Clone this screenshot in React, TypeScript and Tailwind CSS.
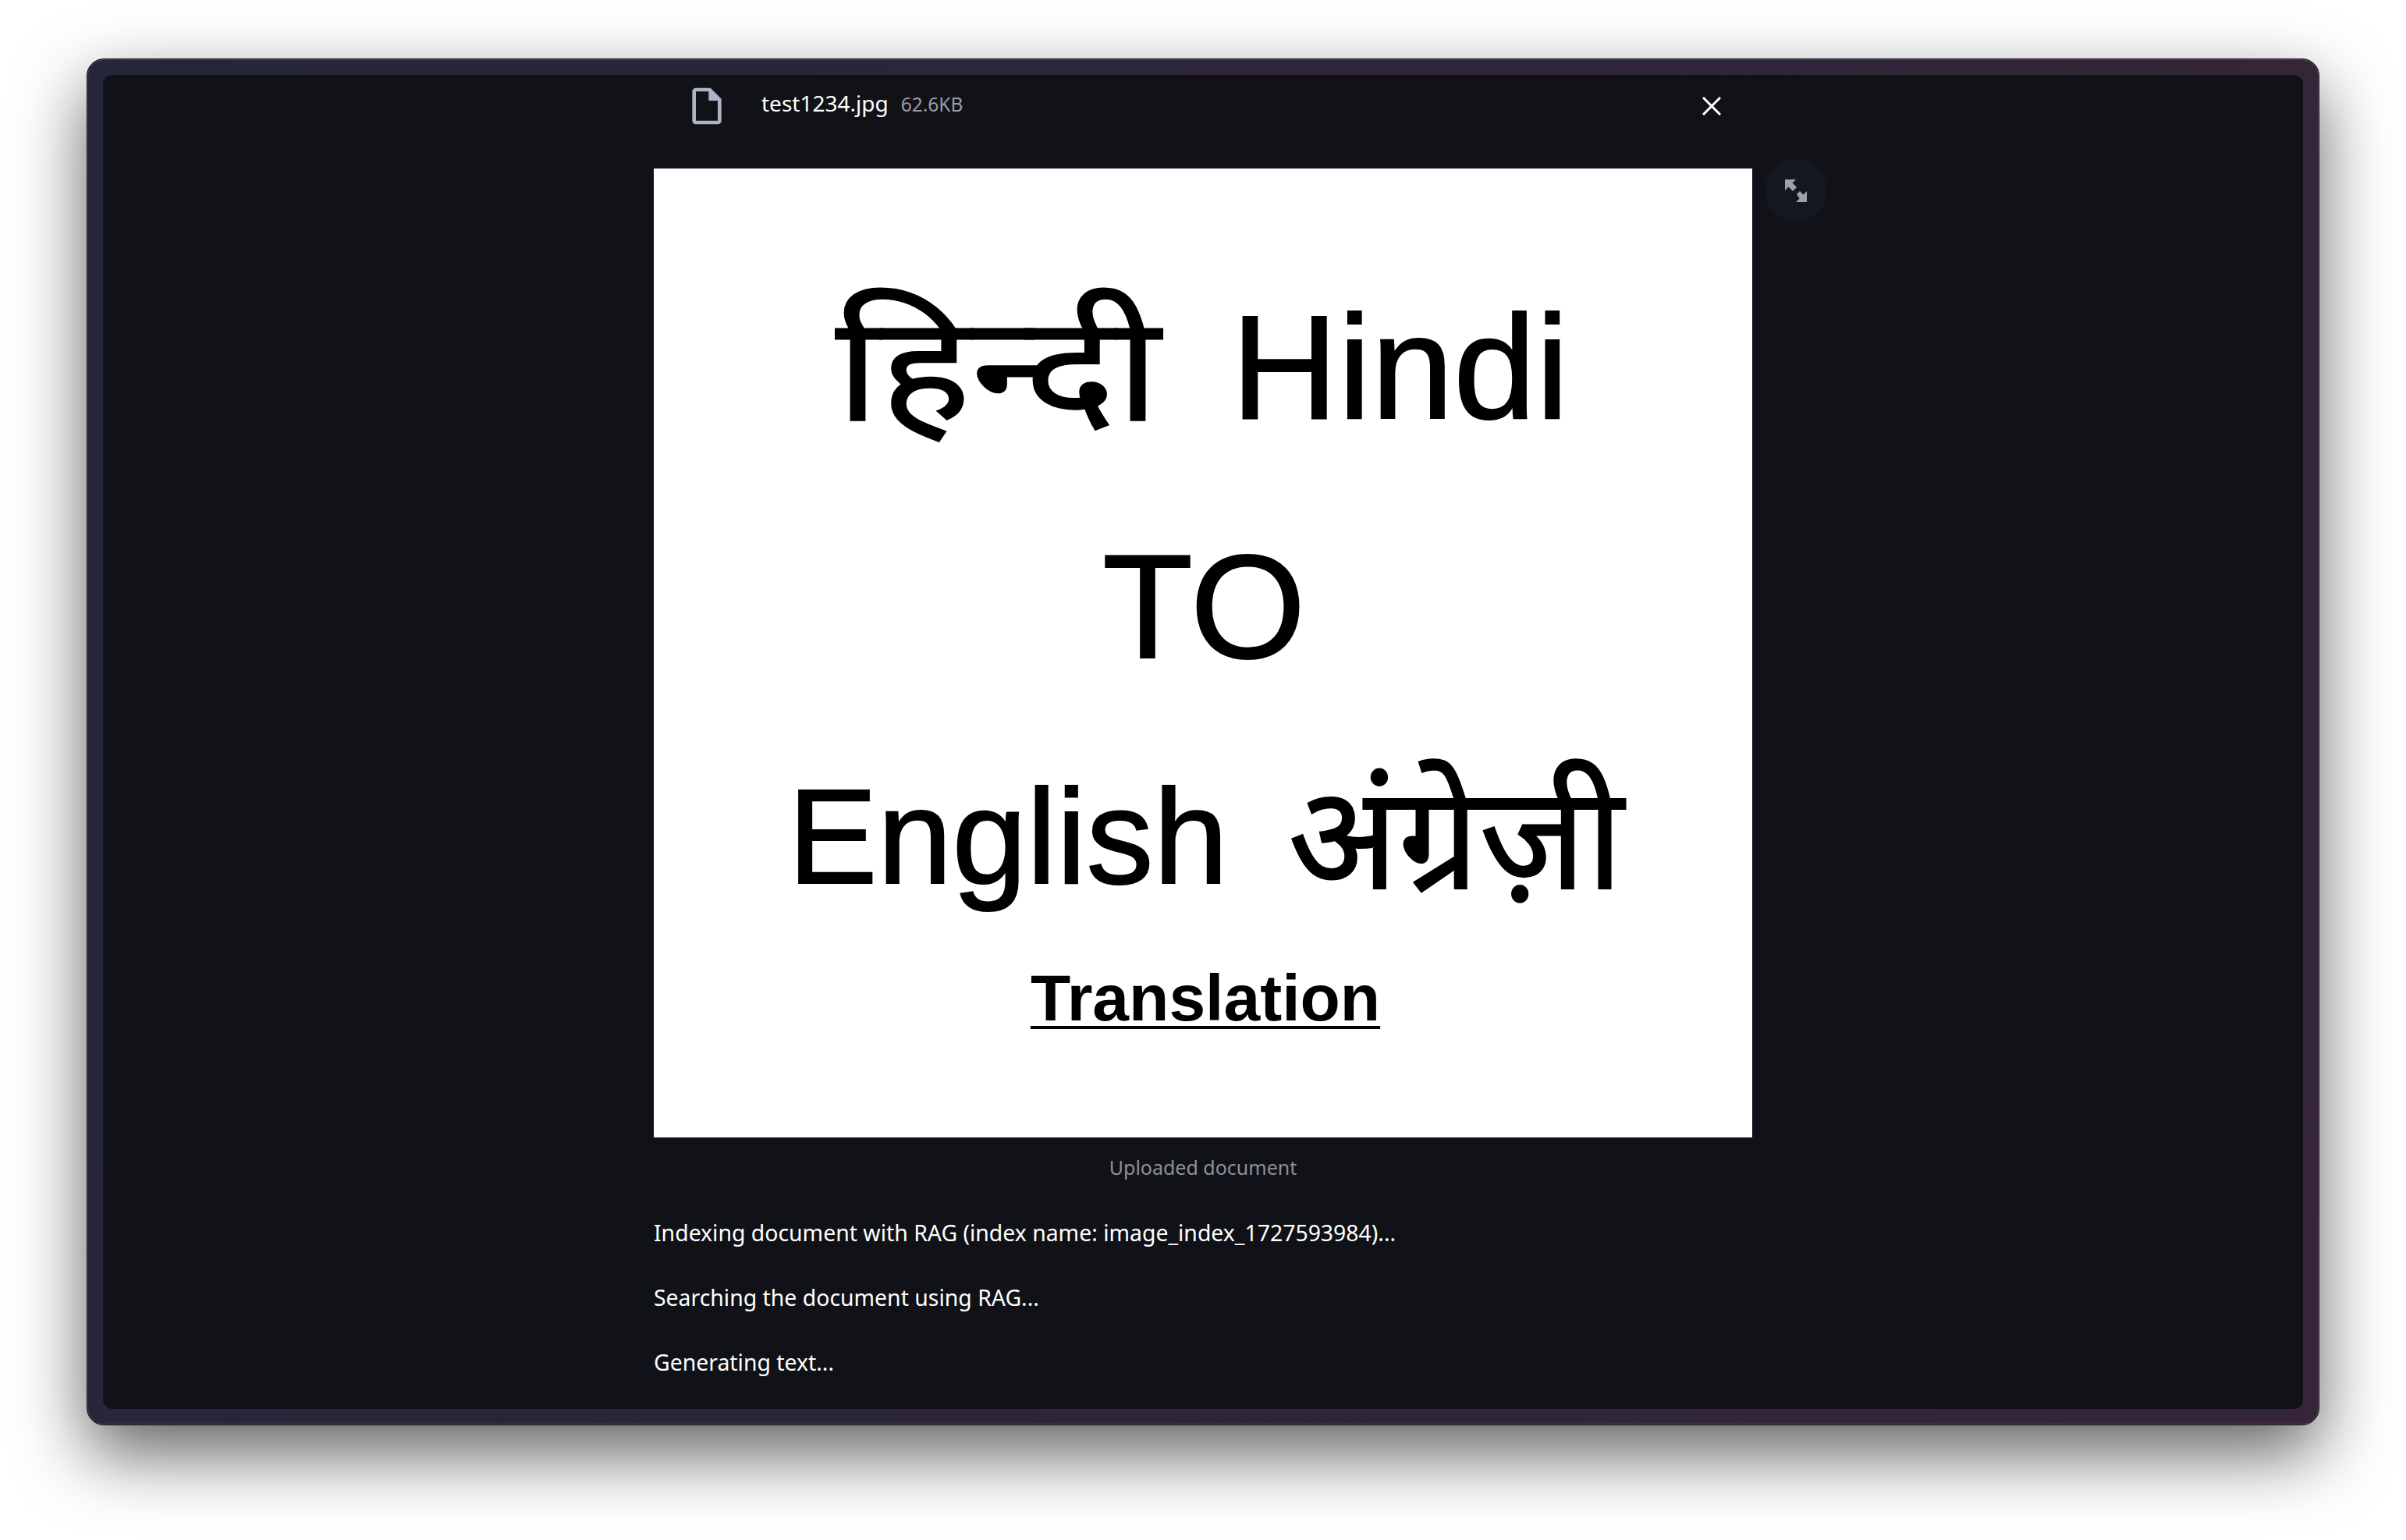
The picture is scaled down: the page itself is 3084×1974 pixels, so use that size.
const sans = "font-['Noto_Sans',sans-serif]";

function FileIcon() {
  return (
    <svg viewBox="0 0 24 24" className="w-14 h-14 shrink-0" fill="#afb2c4">
      <path d="M14 2H6c-1.1 0-1.99.9-1.99 2L4 20c0 1.1.89 2 1.99 2H18c1.1 0 2-.9 2-2V8l-6-6zM6 20V4h7v5h5v11H6z" />
    </svg>
  );
}

function ExpandIcon() {
  return (
    <svg viewBox="0 0 28 29" className="w-7 h-[29px]" fill="#a0a0a5">
      <path d="M0 0H14L9.5 4.5L15 10L10 15L4.5 9.5L0 14Z" />
      <path d="M28 29H14L18.5 24.5L15 19L19 15L23.5 19.5L28 15Z" />
    </svg>
  );
}

function Picture() {
  const base = "absolute font-['Liberation_Sans',sans-serif] text-black whitespace-nowrap leading-none";
  const latin = `${base} [-webkit-text-stroke:2px_black]`;
  return (
    <div className="relative w-[1408px] h-[1242px] bg-white overflow-hidden">
      <div className={`${latin} left-[233px] top-[163px] text-[220px] origin-top scale-y-[0.86]`}>हिन्दी</div>
      <div className={`${latin} left-[740px] top-[159px] text-[190px]`}>Hindi</div>
      <div className={`${latin} left-[575px] top-[466px] text-[190px]`}>TO</div>
      <div className={`${latin} left-[172px] top-[770px] text-[172px]`}>English</div>
      <div className={`${latin} left-[813px] top-[767px] text-[185px]`}>अंग्रेज़ी</div>
      <div className={`${base} left-[483px] top-[1021px] text-[84px] font-bold underline decoration-[4px] underline-offset-[7px]`}>Translation</div>
    </div>
  );
}

export default function App() {
  return (
    <div className="w-[3084px] h-[1974px] bg-white pt-[75px] pl-[111px] overflow-hidden">
      <div className="w-[2862px] h-[1752px] rounded-[22px] border border-black bg-[linear-gradient(100deg,#25263a,#362538)] p-5 shadow-[inset_0_0_0_1px_rgba(255,255,255,0.2),0_36px_90px_rgba(0,0,0,0.62)]">
        <div className={`h-full rounded-[12px] bg-[#101217] flex justify-center ${sans}`}>
          <div className="w-[1408px] relative">
            <div className="h-[80px] mb-10 flex items-center pl-10 relative">
              <FileIcon />
              <div className="ml-[42px] mb-[8px] flex items-baseline">
                <span className="text-[28px] text-white">test1234.jpg</span>
                <span className="ml-4 text-[24.5px] text-[#9b9ca3]">62.6KB</span>
              </div>
              <svg viewBox="0 0 24 24" className="absolute left-[1344px] top-[28px] w-6 h-6" stroke="#fff" strokeWidth="3" fill="none">
                <path d="M1 1L23 23M23 1L1 23" />
              </svg>
            </div>
            <Picture />
            <div className="absolute left-[1424px] top-[108px] w-20 h-20 rounded-full bg-[#141720] flex items-center justify-center">
              <ExpandIcon />
            </div>
            <div className="mt-5 text-center text-[25px] text-[#8f9096]">Uploaded document</div>
            <div className="mt-[42px] flex flex-col gap-[39px] text-[28.4px] leading-[44px] text-white">
              <p>Indexing document with RAG (index name: image_index_1727593984)...</p>
              <p>Searching the document using RAG...</p>
              <p>Generating text...</p>
            </div>
          </div>
        </div>
      </div>
    </div>
  );
}
